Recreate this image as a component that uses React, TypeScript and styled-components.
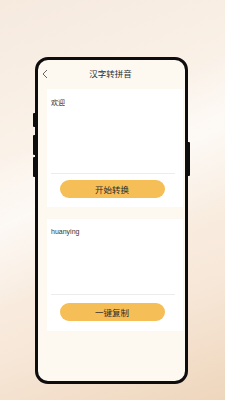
import React from 'react';
import styled, { createGlobalStyle } from 'styled-components';

const GlobalStyle = createGlobalStyle`
  html, body {
    margin: 0;
    padding: 0;
  }
  body {
    font-family: "Noto Sans CJK SC", "Noto Sans", sans-serif;
  }
`;

const Page = styled.div`
  width: 225px;
  height: 400px;
  box-sizing: border-box;
  padding: 57px 0 0 35px;
  overflow: hidden;
  background:
    linear-gradient(155deg, rgba(255, 255, 255, 0) 30%, rgba(255, 255, 255, 0.55) 45%, rgba(255, 255, 255, 0) 62%),
    linear-gradient(160deg, #f6eadf 0%, #fbf3ea 40%, #f7e7d8 75%, #eed6bc 100%);
`;

const Phone = styled.div`
  position: relative;
  width: 153px;
  height: 327px;
  box-sizing: border-box;
  border: 3px solid #0d0d0d;
  border-radius: 13px;
  background: #fdf9f1;
  display: flex;
  flex-direction: column;
`;

const SideKey = styled.span<{ $side: 'left' | 'right'; $top: number; $h: number }>`
  position: absolute;
  ${(p) => (p.$side === 'left' ? 'left: -5px;' : 'right: -5px;')}
  top: ${(p) => p.$top}px;
  width: 3px;
  height: ${(p) => p.$h}px;
  background: #0d0d0d;
  border-radius: 1px;
`;

const Header = styled.div`
  position: relative;
  height: 29px;
  display: flex;
  align-items: center;
  justify-content: center;
  flex-shrink: 0;
`;

const Back = styled.svg`
  position: absolute;
  left: 4px;
  top: 9px;
`;

const Title = styled.div`
  font-size: 8.5px;
  color: #2e2e2e;
  margin-left: -2px;
  margin-top: -3px;
`;

const Card = styled.div<{ $areaH: number; $gap: number; $pt: number; $pb: number }>`
  margin: 0 2px 0 9px;
  background: #ffffff;
  padding: ${(p) => p.$pt}px 0 ${(p) => p.$pb}px;
  display: flex;
  flex-direction: column;
  align-items: center;

  & > div:first-child {
    height: ${(p) => p.$areaH}px;
  }
  & > button {
    margin-top: ${(p) => p.$gap}px;
  }
`;

const TextArea = styled.div`
  align-self: stretch;
  padding: 0 4px;
  font-size: 7px;
  line-height: 10px;
  color: #333333;
  font-family: "Liberation Sans", "Noto Sans CJK SC", sans-serif;
`;

const Divider = styled.div`
  align-self: stretch;
  height: 1px;
  margin: 0 8px 0 4px;
  background: #ececec;
`;

const ActionButton = styled.button`
  width: 105px;
  height: 18px;
  border: none;
  border-radius: 9px;
  background: #f5be56;
  color: #2b2b2b;
  font-family: "Noto Sans CJK SC", sans-serif;
  font-size: 8.5px;
  padding: 0;
  margin-left: -6px;
  display: flex;
  align-items: center;
  justify-content: center;
`;

const Spacer = styled.div`
  height: 12px;
  flex-shrink: 0;
`;

const App: React.FC = () => {
  return (
    <>
      <GlobalStyle />
      <Page>
        <Phone>
          <SideKey $side="left" $top={53} $h={14} />
          <SideKey $side="left" $top={75} $h={20} />
          <SideKey $side="left" $top={97} $h={20} />
          <SideKey $side="right" $top={82} $h={34} />
          <Header>
            <Back width="6" height="10" viewBox="0 0 6 10">
              <polyline points="5,1 1,5 5,9" fill="none" stroke="#555" strokeWidth="0.9" />
            </Back>
            <Title>汉字转拼音</Title>
          </Header>
          <Card $areaH={75} $gap={6} $pt={9} $pb={9}>
            <TextArea>欢迎</TextArea>
            <Divider />
            <ActionButton>开始转换</ActionButton>
          </Card>
          <Spacer />
          <Card $areaH={67} $gap={8} $pt={8} $pb={10}>
            <TextArea>huanying</TextArea>
            <Divider />
            <ActionButton>一键复制</ActionButton>
          </Card>
        </Phone>
      </Page>
    </>
  );
};

export default App;
